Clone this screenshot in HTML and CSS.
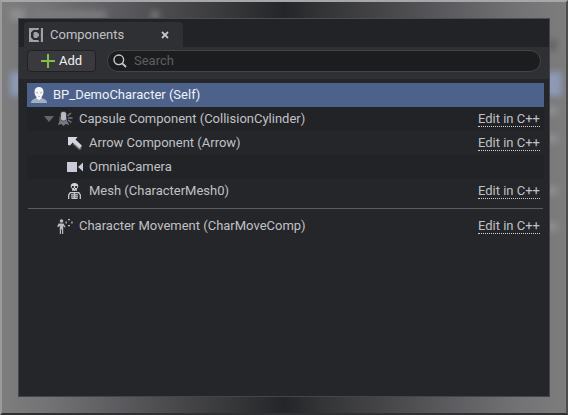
FILE: index.html
```html
<!DOCTYPE html>
<html lang="en">
<head>
<meta charset="utf-8">
<meta name="viewport" content="width=device-width, initial-scale=1">
<title>Components</title>
<link rel="stylesheet" href="styles.css">
</head>
<body>
<div class="frame">
  <div class="haze" aria-hidden="true">
    <i class="smudge smudge-logo"></i>
    <i class="smudge smudge-title"></i>
    <i class="smudge smudge-close"></i>
    <i class="smudge smudge-row smudge-left"></i>
    <i class="smudge smudge-row smudge-right"></i>
    <i class="smudge smudge-shade"></i>
    <i class="smudge smudge-link link-a"></i>
    <i class="smudge smudge-link link-b"></i>
    <i class="smudge smudge-link link-c"></i>
    <i class="smudge smudge-link link-d"></i>
  </div>
  <main class="panel">
    <header class="tabs">
      <div class="tab">
        <svg class="tab-icon" viewBox="0 0 14 14" aria-hidden="true">
          <path fill="#9fa2a9" d="M0 0h14v14H0z"/>
          <path fill="#2b2c31" d="M4.500 2H9l1-1h1.500v4.500H9L8 4H5.500L4.500 5v4l1 1H8l1-1.500h2.500V13H10l-1-1H4.500L2 9.500v-5z"/>
          <path fill="#2f3033" d="M10 0h1.800v14H10z"/>
        </svg>
        <span class="tab-title">Components</span>
        <button class="tab-close" type="button" aria-label="Close tab">
          <svg viewBox="0 0 8 8" aria-hidden="true"><path d="M1 1l6 6M7 1L1 7" fill="none" stroke="#c3c4c8" stroke-width="1.800"/></svg>
        </button>
      </div>
    </header>
    <div class="toolbar">
      <button class="add" type="button">
        <svg viewBox="0 0 14 14" aria-hidden="true"><path d="M7 0v14M0 7h14" fill="none" stroke="#7fc04a" stroke-width="2"/></svg>
        <span>Add</span>
      </button>
      <label class="search">
        <svg viewBox="0 0 14 14" aria-hidden="true"><path d="M9.300 9.300L13 13" stroke="#c8c9cc" stroke-width="1.800"/><circle cx="5.800" cy="5.800" r="4.800" fill="none" stroke="#c8c9cc" stroke-width="1.400"/></svg>
        <input type="search" placeholder="Search" aria-label="Search components">
      </label>
    </div>
    <ul class="tree">
      <li class="row selected">
        <svg class="icon" viewBox="0 0 16 16" aria-hidden="true">
          <path fill="#a3adc3" d="M0 16c0-2.500 1.500-3.800 5.500-5h5c4 1.200 5.500 2.500 5.500 5z"/>
          <path fill="#f4f5f7" d="M8 0c2.800 0 4.500 2 4.500 4.800 0 2.200-.8 4-2 5.200v1.500L8 13l-2.500-1.500V10c-1.200-1.200-2-3-2-5.200C3.500 2 5.200 0 8 0z"/>
          <path fill="#a3adc3" d="M5 5.200h2v1H5zM9 5.200h2v1H9zM7 9h2v.8H7z"/>
        </svg>
        <span class="name">BP_DemoCharacter (Self)</span>
      </li>
      <li class="row level-1 shaded">
        <button class="toggle" type="button" aria-label="Collapse Capsule Component">
          <svg viewBox="0 0 10 6" aria-hidden="true"><path fill="#64666b" d="M0 0h10L5 6z"/></svg>
        </button>
        <svg class="icon" viewBox="0 0 16 16" aria-hidden="true">
          <path fill="#777980" d="M2.500 5.500V10L1 14l3.500-1 2 2 2-2 4 1-2.500-4V6z"/>
          <rect x="3.500" y="0.500" width="6" height="9.500" rx="2.500" fill="#b9bbc2" stroke="#222327" stroke-width="0.600"/>
          <path fill="none" stroke="#777980" stroke-width="1.500" d="M10.500 5L14 2M11 7h4.500M11 9l3.500 2.500"/>
        </svg>
        <span class="name">Capsule Component (CollisionCylinder)</span>
        <a class="edit" href="#">Edit in C++</a>
      </li>
      <li class="row level-2">
        <svg class="icon" viewBox="0 0 16 16" aria-hidden="true">
          <path fill="#696b70" d="M5.500 9l1.500-1.500 6 5.500 2-1-1 2.500-2 .5z"/>
          <path fill="#d5d6e0" d="M1 2h9.500L8.500 4.500l6.500 6.200-2.300 2.800-7-6L3 10.500 1 10z"/>
        </svg>
        <span class="name">Arrow Component (Arrow)</span>
        <a class="edit" href="#">Edit in C++</a>
      </li>
      <li class="row level-2 shaded">
        <svg class="icon" viewBox="0 0 16 16" aria-hidden="true">
          <path fill="#c9cad6" d="M0 3h10v10H0zM16 3.500v9L11 8z"/>
        </svg>
        <span class="name">OmniaCamera</span>
      </li>
      <li class="row level-2">
        <svg class="icon" viewBox="0 0 16 16" aria-hidden="true">
          <path fill="#d2d4d8" d="M7.500 0C10 0 11.300 1.300 11.300 3.300c0 1.200-.6 2-1.500 2.500V8H5.200V5.800C4.300 5.300 3.700 4.500 3.700 3.300 3.700 1.300 5 0 7.500 0z"/>
          <path fill="#25262b" d="M4.800 3h2v2h-2zM8.200 3h2v2h-2zM7.100 5.200h.8v1h-.8zM6.500 7h.5v1h-.5zM8 7h.5v1H8z"/>
          <path fill="none" stroke="#c7c9cf" stroke-width="1.300" d="M1.700 16v-4l1.500-2.400h8.600l1.500 2.400v4M7.500 9v7M4 11.900h7M4 13.900h7M4.500 15.700h6"/>
        </svg>
        <span class="name">Mesh (CharacterMesh0)</span>
        <a class="edit" href="#">Edit in C++</a>
      </li>
    </ul>
    <hr class="divider">
    <ul class="tree">
      <li class="row level-1">
        <span class="toggle"></span>
        <svg class="icon" viewBox="0 0 16 16" aria-hidden="true">
          <circle cx="4.500" cy="3" r="1.800" fill="#b9bbc1"/>
          <path fill="#b9bbc1" d="M1.500 5.500h5L8.500 9l-1 .6-1.300-1.800V16H5v-4.500H4V16H2.800V7.800L1 9.200l-.8-.9z"/>
          <path fill="#b9bbc1" d="M11 1h2v1.300h-2zM8.500 3.500h1.300v2H8.500zM14.300 3.500h1.300v2h-1.300zM11 7h2v1.300h-2z"/>
        </svg>
        <span class="name">Character Movement (CharMoveComp)</span>
        <a class="edit" href="#">Edit in C++</a>
      </li>
    </ul>
  </main>
</div>
</body>
</html>
```

FILE: styles.css
```css
* {
  box-sizing: border-box;
}

body {
  margin: 0;
  font-family: Roboto, "Liberation Sans", sans-serif;
  font-size: 13px;
  line-height: 16px;
  color: #c0c1c5;
}

button {
  margin: 0;
  padding: 0;
  border: 0;
  background: none;
  color: inherit;
  font: inherit;
}

svg {
  display: block;
  flex: none;
}

.frame {
  position: relative;
  display: flex;
  min-height: 100vh;
  padding: 16px;
  border: 2px solid;
  border-color: #a7a7aa #4c4c4d #303031 #9b9b9c;
  background: linear-gradient(90deg, #7d7d7e 0%, #737375 8%, #5d5d61 20%, #464649 32%, #343537 42%, #242529 50%, #343537 57%, #464649 68%, #5d5d61 80%, #737375 92%, #7d7d7e 100%);
}

.haze {
  position: absolute;
  inset: 0;
  overflow: hidden;
}

.smudge {
  position: absolute;
  filter: blur(3px);
  background: #8e8e91;
}

.smudge-logo { left: 8px; top: 7px; width: 14px; height: 12px; }
.smudge-title { left: 32px; top: 9px; width: 72px; height: 8px; background: #7c7c80; }
.smudge-close { left: 149px; top: 9px; width: 8px; height: 8px; background: #77777b; }
.smudge-row { top: 70px; width: 24px; height: 24px; background: #8c9ab5; }
.smudge-left { left: 8px; }
.smudge-right { right: 4px; }
.smudge-shade { right: 10px; top: 38px; width: 8px; height: 10px; background: #606062; }
.smudge-link { right: 8px; width: 16px; height: 9px; }
.link-a { top: 104px; }
.link-b { top: 132px; }
.link-c { top: 184px; }
.link-d { top: 220px; }

.panel {
  position: relative;
  flex: 1;
  min-width: 0;
  border: 1px solid #44454a;
  border-top-color: #4c4d50;
  background: #25262a;
}

.tabs {
  display: flex;
  padding: 3px 5px 0;
  background: #222327;
}

.tab {
  display: flex;
  align-items: center;
  gap: 7px;
  width: 159px;
  height: 25px;
  padding: 0 14px 0 5px;
  border-radius: 4px 4px 0 0;
  background: #2f3033;
}

.tab-icon {
  width: 14px;
  height: 14px;
}

.tab-title {
  flex: 1;
}

.tab-close svg {
  width: 8px;
  height: 8px;
}

.toolbar {
  display: flex;
  gap: 11px;
  padding: 3px 8px 7px;
  background: #2f3033;
}

.add {
  display: flex;
  align-items: center;
  justify-content: center;
  gap: 4px;
  width: 69px;
  height: 22px;
  border: 1px solid #202124;
  border-radius: 4px;
  background: #3a3a3e;
  color: #f0f0f1;
}

.add svg,
.search svg {
  width: 14px;
  height: 14px;
}

.search {
  display: flex;
  flex: 1;
  align-items: center;
  gap: 7px;
  min-width: 0;
  height: 22px;
  padding: 0 12px 0 5px;
  border: 1px solid #434447;
  border-radius: 11px;
  background: #1c1d1e;
}

.search input {
  flex: 1;
  min-width: 0;
  height: 16px;
  padding: 0;
  border: 0;
  outline: 0;
  background: none;
  color: #c0c1c5;
  font: inherit;
}

.search input::placeholder {
  color: #5e5f62;
  opacity: 1;
}

.tree {
  margin: 0;
  padding: 0 5px 0 8px;
  list-style: none;
}

.toolbar + .tree {
  padding-top: 4px;
}

.row {
  display: flex;
  align-items: center;
  gap: 6px;
  height: 24px;
  padding: 0 4px;
}

.selected {
  background: #4c628b;
  color: #f0f2f5;
}

.shaded {
  background: #222327;
}

.level-1 {
  padding-left: 16px;
}

.level-2 {
  padding-left: 40px;
}

.toggle {
  width: 12px;
  margin-right: -4px;
}

.toggle svg {
  width: 10px;
  height: 6px;
  margin: auto;
}

.icon {
  width: 16px;
  height: 16px;
}

.name {
  flex: 1;
  white-space: nowrap;
}

.edit {
  color: inherit;
  line-height: 14px;
  text-decoration: none;
  border-bottom: 1px dotted #d0d1d4;
}

.divider {
  height: 1px;
  margin: 5px 6px 5px 9px;
  border: 0;
  background: #5c5d61;
}
```
